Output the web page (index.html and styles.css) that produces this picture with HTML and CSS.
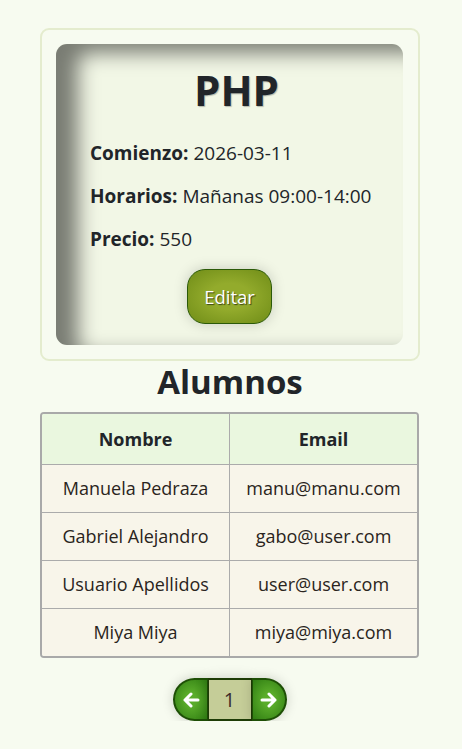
FILE: index.html
```html
<!DOCTYPE html>
<html lang="es">
<head>
<meta charset="utf-8">
<title>Curso PHP</title>
<link rel="stylesheet" href="styles.css">
</head>
<body>
<main class="page">
  <section class="course-frame">
    <div class="course-card">
      <h1 class="course-title">PHP</h1>
      <p class="course-line"><strong>Comienzo:</strong> 2026-03-11</p>
      <p class="course-line"><strong>Horarios:</strong> Mañanas 09:00-14:00</p>
      <p class="course-line"><strong>Precio:</strong> 550</p>
      <div class="course-actions">
        <button class="btn-edit" type="button">Editar</button>
      </div>
    </div>
  </section>

  <h2 class="section-title">Alumnos</h2>

  <div class="table-wrap">
    <table class="students">
      <thead>
        <tr><th>Nombre</th><th>Email</th></tr>
      </thead>
      <tbody>
        <tr><td>Manuela Pedraza</td><td>manu@manu.com</td></tr>
        <tr><td>Gabriel Alejandro</td><td>gabo@user.com</td></tr>
        <tr><td>Usuario Apellidos</td><td>user@user.com</td></tr>
        <tr><td>Miya Miya</td><td>miya@miya.com</td></tr>
      </tbody>
    </table>
  </div>

  <nav class="pager">
    <button class="pager-btn pager-prev" type="button" aria-label="Anterior">
      <svg width="18" height="16" viewBox="0 0 18 16"><path d="M16 8H3M9 2L3 8l6 6" fill="none" stroke="#fff" stroke-width="3" stroke-linecap="round" stroke-linejoin="round"/></svg>
    </button>
    <span class="pager-num">1</span>
    <button class="pager-btn pager-next" type="button" aria-label="Siguiente">
      <svg width="18" height="16" viewBox="0 0 18 16"><path d="M2 8h13M9 2l6 6-6 6" fill="none" stroke="#fff" stroke-width="3" stroke-linecap="round" stroke-linejoin="round"/></svg>
    </button>
  </nav>
</main>
</body>
</html>
```

FILE: styles.css
```css
* { box-sizing: border-box; }

html { font-size: 18px; }

body {
  margin: 0;
  background: #f7fbf0;
  color: #212529;
  font-family: "Open Sans", "Noto Sans", sans-serif;
  line-height: 1.5;
}

.page {
  width: 380px;
  margin: 28px 0 0 40px;
  display: flex;
  flex-direction: column;
  align-items: stretch;
}

.course-frame {
  border: 2px solid #e4ecce;
  border-radius: 9px;
  padding: 14px 15px 14px 14px;
}

.course-card {
  background: #f2f7e6;
  border-radius: 11px;
  padding: 20px 20px 21px 34px;
  box-shadow: inset 22px 9px 20px #797c73;
}

.course-title {
  margin: 0 0 24px;
  font-size: 42px;
  line-height: 52px;
  font-weight: 700;
  text-align: center;
  text-shadow: 1px 1px 1px rgba(0,0,0,0.25);
}

.course-line {
  margin: 0 0 16px;
  font-size: 19px;
  line-height: 27px;
}

.course-line strong { font-weight: 700; }

.course-actions {
  display: flex;
  justify-content: center;
  padding-right: 14px;
  margin-top: 0;
}

.btn-edit {
  font-family: inherit;
  font-size: 18.5px;
  line-height: 27px;
  height: 55px;
  padding: 0 16px;
  color: #fff;
  border: 1px solid #2b5a08;
  border-radius: 18px;
  background: radial-gradient(ellipse at center, #93ab2c 35%, #6f8c17 100%);
  box-shadow: 0 0 14px rgba(0,0,0,0.18);
  text-shadow: 1px 1px 1px rgba(0,0,0,0.6);
}

.section-title {
  margin: 0 0 9px;
  font-size: 33px;
  line-height: 42px;
  font-weight: 700;
  text-align: center;
}

.table-wrap {
  width: 379px;
  border: 2px solid #a9a9a9;
  border-radius: 4px;
  overflow: hidden;
}

.students {
  width: 100%;
  border-collapse: collapse;
  table-layout: fixed;
  font-size: 18px;
}

.students th,
.students td {
  text-align: center;
  line-height: 27px;
  border: 1px solid #ababab;
}

.students tr > :first-child { border-left: 0; }
.students tr > :last-child { border-right: 0; }
.students thead th { border-top: 0; }
.students tbody tr:last-child td { border-bottom: 0; }

.students th {
  background: #eaf7df;
  font-weight: 700;
  padding: 12px 8px 11px;
}

.students td {
  background: #f8f5ea;
  padding: 10px 8px;
  font-weight: 400;
  color: #2a2420;
}

.pager {
  display: flex;
  justify-content: center;
  width: 379px;
  margin-top: 20px;
}

.pager-btn {
  width: 35px;
  height: 43px;
  padding: 0;
  border: 2px solid #1e4f06;
  background: radial-gradient(ellipse at center, #5aac2a 25%, #2f7d12 100%);
  display: flex;
  align-items: center;
  justify-content: center;
  box-shadow: 0 0 12px rgba(0,0,0,0.18);
}

.pager-prev { border-radius: 22px 0 0 22px; border-right-width: 1px; }
.pager-next { border-radius: 0 22px 22px 0; border-left-width: 1px; }

.pager-num {
  width: 44px;
  height: 43px;
  display: flex;
  align-items: center;
  justify-content: center;
  background: #c5cd98;
  border-top: 2px solid #1e3c06;
  border-bottom: 2px solid #1e3c06;
  border-left: 1px solid #1e3c06;
  border-right: 1px solid #1e3c06;
  font-size: 20px;
  color: #3b2a2a;
  box-shadow: 0 0 12px rgba(0,0,0,0.18);
}
```
